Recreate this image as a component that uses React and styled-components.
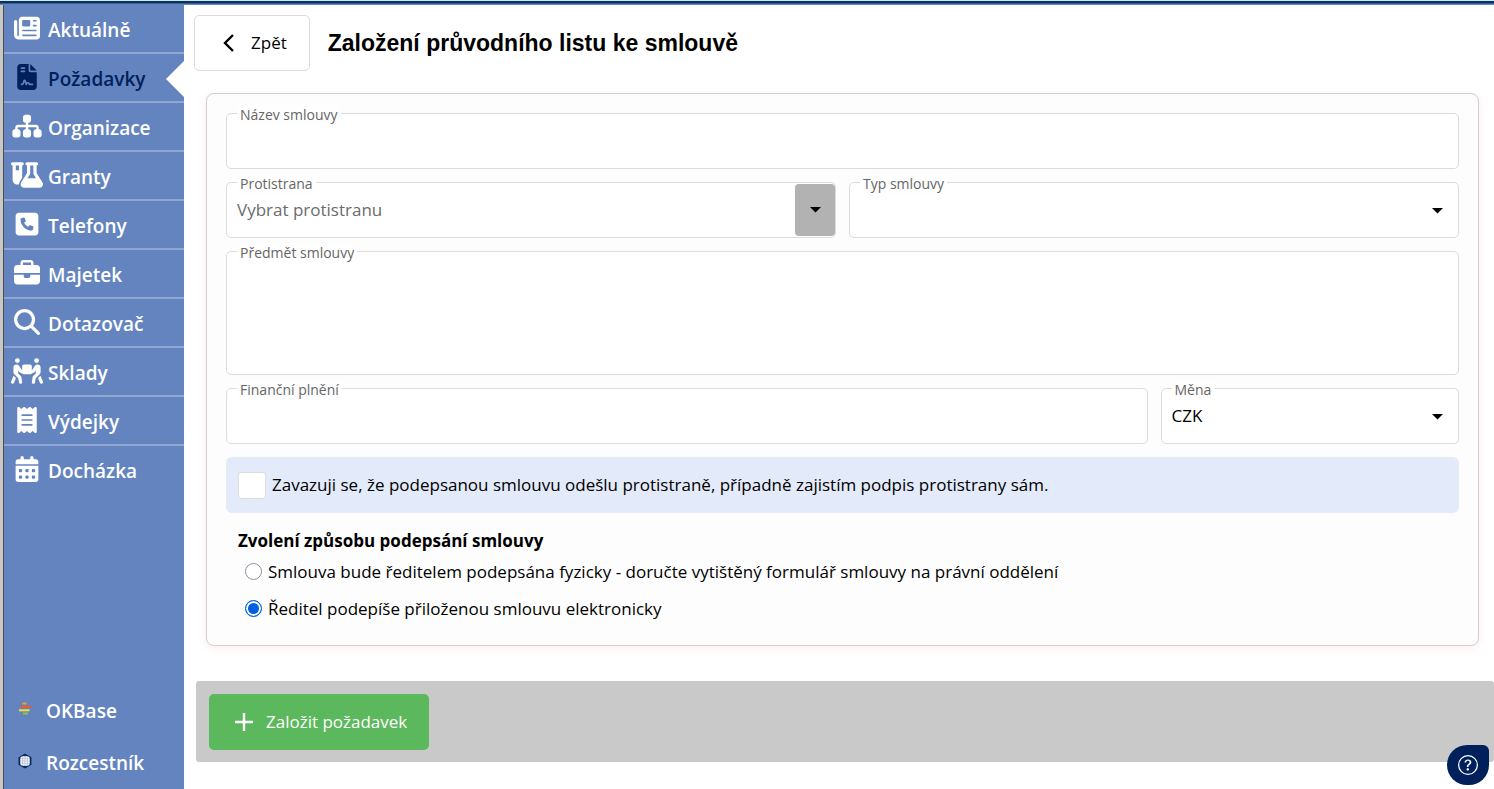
import { useState } from "react";
import styled, { createGlobalStyle } from "styled-components";
import {
  FaNewspaper,
  FaFileContract,
  FaSitemap,
  FaFlaskVial,
  FaSquarePhone,
  FaBriefcase,
  FaMagnifyingGlass,
  FaPeopleCarryBox,
  FaReceipt,
  FaCalendarDays,
} from "react-icons/fa6";
import { BsQuestionCircle } from "react-icons/bs";

const GlobalStyle = createGlobalStyle`
  * {
    box-sizing: border-box;
  }

  body {
    margin: 0;
    background-color: #fff;
    color: #000;
    font-family: "Open Sans", "Noto Sans", sans-serif;
    font-size: 17px;
    line-height: 24px;
  }

  input, select, textarea, button {
    font: inherit;
    color: inherit;
  }
`;

const Page = styled.div`
  min-height: 100vh;
  display: flex;
  flex-direction: column;
`;

const TopStrip = styled.div`
  height: 5px;
  border-top: 1px solid #dde2e8;
  border-bottom: 1px solid #6484bf;
  background: linear-gradient(#003366 2px, #3f5f8c 2px);
`;

const Body = styled.div`
  flex: 1;
  display: flex;
  align-items: stretch;
`;

const Sidebar = styled.nav`
  flex: 0 0 184px;
  display: flex;
  flex-direction: column;
  justify-content: space-between;
  border-left: 3px solid #c8c8c8;
  background-color: #6484bf;
  box-shadow: inset 1px 0 #4d4d55;
`;

const Menu = styled.ul`
  list-style: none;
  margin: 0;
  padding: 0 0 1px 1px;
`;

const MenuItem = styled.li`
  position: relative;
  height: 49px;
  border-bottom: 2px solid #92a6d2;

  &:last-child {
    border-bottom-color: transparent;
  }

  &::after {
    content: "";
    display: ${(props) => (props.$active ? "block" : "none")};
    position: absolute;
    top: 7px;
    right: 0;
    border: 18px solid transparent;
    border-left: none;
    border-right-color: #fff;
  }
`;

const MenuLink = styled.a`
  height: 100%;
  display: flex;
  align-items: center;
  gap: 5px;
  padding: 3px 0 0 7px;
  color: ${(props) => (props.$active ? "#00205b" : "#fff")};
  font-size: 19px;
  font-weight: 600;
  text-decoration: none;

  svg {
    width: 32px;
    height: 26px;
    flex: none;
    margin-bottom: 4px;
  }
`;

const BottomLink = styled(MenuLink)`
  height: 52px;
  gap: 11px;
  padding: 0 0 0 14px;

  svg {
    width: 18px;
    height: 18px;
  }
`;

const Main = styled.main`
  flex: 1;
  min-width: 0;
  padding-bottom: 26px;
`;

const Header = styled.header`
  display: flex;
  align-items: center;
  gap: 18px;
  padding: 10px 10px 0;
`;

const BackButton = styled.button`
  height: 56px;
  display: flex;
  align-items: center;
  gap: 17px;
  padding: 0 22px 0 28px;
  border: 1px solid #dcdcdc;
  border-radius: 5px;
  background-color: #fff;
`;

const Title = styled.h1`
  margin: 0;
  font: bold 23px/28px "Liberation Sans", Arial, sans-serif;
`;

const Panel = styled.form`
  display: grid;
  grid-template-columns: repeat(12, 1fr);
  gap: 13px;
  margin: 22px 15px 35px 22px;
  padding: 19px 19px 18px;
  border: 1px solid #cfd0d2;
  border-radius: 8px;
  background-color: #fdfdfd;
  box-shadow: 0 2px 8px rgba(255, 0, 0, 0.08);
`;

const Field = styled.div`
  grid-column: span ${(props) => props.$span};
  position: relative;
  height: ${(props) => (props.$tall ? "124px" : "56px")};
  display: flex;
  border: 1px solid #dcdcdc;
  border-radius: 5px;
  background-color: #fff;

  input,
  textarea,
  select {
    flex: 1;
    min-width: 0;
    padding: 0 10px;
    border: none;
    border-radius: 5px;
    outline: none;
    background: transparent;
    resize: none;
    appearance: none;
  }

  input::placeholder {
    color: #6c6c6c;
    opacity: 1;
  }

  > svg {
    position: absolute;
    top: 25px;
    right: 15px;
    pointer-events: none;
  }
`;

const FieldLabel = styled.label`
  position: absolute;
  top: -9px;
  left: 10px;
  padding: 0 3px;
  background-color: #fefefe;
  color: #666;
  font-size: 14px;
  line-height: 20px;
`;

const DropButton = styled.button`
  width: 40px;
  display: flex;
  align-items: center;
  justify-content: center;
  margin: 1px 0;
  padding: 0;
  border: none;
  border-radius: 4px;
  background-color: #b2b2b2;
`;

const Consent = styled.div`
  grid-column: span 12;
  min-height: 56px;
  display: flex;
  align-items: center;
  gap: 6px;
  padding: 0 12px;
  border-radius: 6px;
  background-color: #e3eaf9;
`;

const CheckBox = styled.input`
  appearance: none;
  width: 28px;
  height: 27px;
  margin: 0;
  border: 1px solid #dcdcdc;
  border-radius: 3px;
  background-color: #fff;

  &:checked {
    background-color: #6484bf;
  }
`;

const Choices = styled.fieldset`
  grid-column: span 12;
  min-width: 0;
  margin: 0;
  padding: 0 12px;
  border: none;

  legend {
    padding: 3px 0 0;
    font-weight: 700;
  }
`;

const Choice = styled.div`
  height: 37px;
  display: flex;
  align-items: center;
  gap: 6px;
  padding-left: 7px;

  input {
    appearance: none;
    width: 17px;
    height: 17px;
    margin: 0;
    border: 1px solid #8f8f9d;
    border-radius: 50%;
    background-color: #fff;
  }

  input:checked {
    border-color: #0060df;
    background-color: #0060df;
    box-shadow: inset 0 0 0 2px #fff;
  }
`;

const ActionBar = styled.div`
  margin-left: 12px;
  padding: 13px 13px 12px;
  border-radius: 3px;
  background-color: #c9c9c9;
`;

const SubmitButton = styled.button`
  height: 56px;
  display: flex;
  align-items: center;
  gap: 12px;
  padding: 0 22px 0 25px;
  border: none;
  border-radius: 5px;
  background-color: #5cb85c;
  color: #fff;
`;

const HelpButton = styled.button`
  position: fixed;
  right: 5px;
  bottom: 4px;
  width: 42px;
  height: 40px;
  display: flex;
  align-items: center;
  justify-content: center;
  padding: 0;
  border: none;
  border-radius: 20px 6px 20px 20px;
  background-color: #00205b;
  color: #fff;
`;

const menu = [
  { label: "Aktuálně", Icon: FaNewspaper },
  { label: "Požadavky", Icon: FaFileContract, active: true },
  { label: "Organizace", Icon: FaSitemap },
  { label: "Granty", Icon: FaFlaskVial },
  { label: "Telefony", Icon: FaSquarePhone },
  { label: "Majetek", Icon: FaBriefcase },
  { label: "Dotazovač", Icon: FaMagnifyingGlass },
  { label: "Sklady", Icon: FaPeopleCarryBox },
  { label: "Výdejky", Icon: FaReceipt },
  { label: "Docházka", Icon: FaCalendarDays },
];

const choices = [
  {
    id: "physical",
    label:
      "Smlouva bude ředitelem podepsána fyzicky - doručte vytištěný formulář smlouvy na právní oddělení",
  },
  {
    id: "electronic",
    label: "Ředitel podepíše přiloženou smlouvu elektronicky",
  },
];

const Caret = () => (
  <svg width="11" height="6" viewBox="0 0 11 6" aria-hidden="true">
    <path d="M0 0h11L5.500 5.500z" fill="#000" />
  </svg>
);

const OkBaseLogo = () => (
  <svg viewBox="0 0 18 18" aria-hidden="true">
    <path d="M5.500 3.500h4" stroke="#e8a33a" strokeWidth="2" />
    <path d="M3.500 6.700h10.500" stroke="#f15a29" strokeWidth="2.200" />
    <path d="M2 10.300h10.500" stroke="#f2e22e" strokeWidth="2" />
    <path d="M6 13.500h5" stroke="#8cc63f" strokeWidth="2" />
  </svg>
);

const HubLogo = () => (
  <svg viewBox="0 0 18 18" aria-hidden="true">
    <path d="M8 1.500l6.500 3.700v7.600L8 16.500l-6.500-3.700V5.200z" fill="#0b2a66" />
    <rect x="3.300" y="4.300" width="9.400" height="9.400" rx="2.500" fill="#fff" />
    <path
      d="M5.700 4.500v9M8 4.500v9M10.300 4.500v9M3.500 6.700h9M3.500 9h9M3.500 11.300h9"
      stroke="#8d9cbf"
      strokeWidth="0.500"
    />
  </svg>
);

const App = () => {
  const [method, setMethod] = useState("electronic");

  return (
    <Page>
      <GlobalStyle />
      <TopStrip />
      <Body>
        <Sidebar>
          <Menu>
            {menu.map(({ label, Icon, active }) => (
              <MenuItem key={label} $active={active}>
                <MenuLink href="#" $active={active}>
                  <Icon />
                  {label}
                </MenuLink>
              </MenuItem>
            ))}
          </Menu>
          <div>
            <BottomLink href="#">
              <OkBaseLogo />
              OKBase
            </BottomLink>
            <BottomLink href="#">
              <HubLogo />
              Rozcestník
            </BottomLink>
          </div>
        </Sidebar>
        <Main>
          <Header>
            <BackButton type="button">
              <svg width="11" height="18" viewBox="0 0 11 18" aria-hidden="true">
                <path d="M10 1L2 9l8 8" fill="none" stroke="#000" strokeWidth="2.400" />
              </svg>
              Zpět
            </BackButton>
            <Title>Založení průvodního listu ke smlouvě</Title>
          </Header>
          <Panel id="contract">
            <Field $span={12}>
              <FieldLabel htmlFor="name">Název smlouvy</FieldLabel>
              <input id="name" type="text" />
            </Field>
            <Field $span={6}>
              <FieldLabel htmlFor="party">Protistrana</FieldLabel>
              <input id="party" type="text" placeholder="Vybrat protistranu" />
              <DropButton type="button" aria-label="Protistrana">
                <Caret />
              </DropButton>
            </Field>
            <Field $span={6}>
              <FieldLabel htmlFor="type">Typ smlouvy</FieldLabel>
              <select id="type">
                <option></option>
              </select>
              <Caret />
            </Field>
            <Field $span={12} $tall>
              <FieldLabel htmlFor="subject">Předmět smlouvy</FieldLabel>
              <textarea id="subject" />
            </Field>
            <Field $span={9}>
              <FieldLabel htmlFor="amount">Finanční plnění</FieldLabel>
              <input id="amount" type="text" />
            </Field>
            <Field $span={3}>
              <FieldLabel htmlFor="currency">Měna</FieldLabel>
              <select id="currency">
                <option>CZK</option>
              </select>
              <Caret />
            </Field>
            <Consent>
              <CheckBox id="consent" type="checkbox" />
              <label htmlFor="consent">
                Zavazuji se, že podepsanou smlouvu odešlu protistraně, případně zajistím podpis
                protistrany sám.
              </label>
            </Consent>
            <Choices>
              <legend>Zvolení způsobu podepsání smlouvy</legend>
              {choices.map(({ id, label }) => (
                <Choice key={id}>
                  <input
                    id={id}
                    type="radio"
                    name="method"
                    checked={method === id}
                    onChange={() => setMethod(id)}
                  />
                  <label htmlFor={id}>{label}</label>
                </Choice>
              ))}
            </Choices>
          </Panel>
          <ActionBar>
            <SubmitButton type="submit" form="contract">
              <svg width="20" height="20" viewBox="0 0 20 20" aria-hidden="true">
                <path d="M10 1v18M1 10h18" stroke="#fff" strokeWidth="2.400" />
              </svg>
              Založit požadavek
            </SubmitButton>
          </ActionBar>
        </Main>
      </Body>
      <HelpButton type="button" aria-label="?">
        <BsQuestionCircle size={20} />
      </HelpButton>
    </Page>
  );
};

export default App;
